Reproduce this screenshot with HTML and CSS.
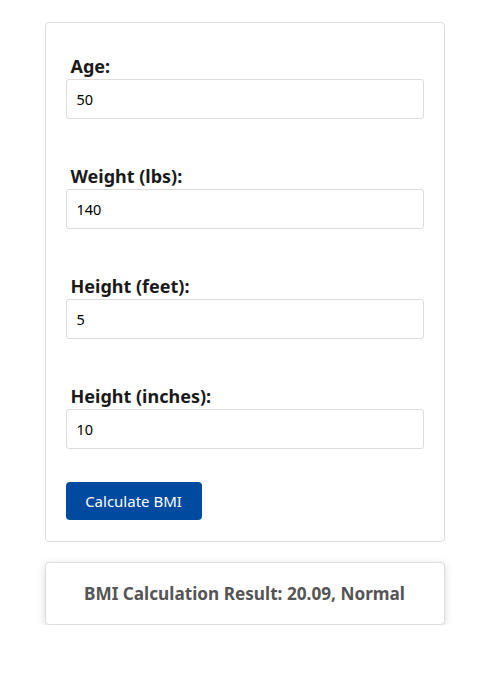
FILE: index.html
```html
<!DOCTYPE html>
<html>
<head>
<meta charset="utf-8">
<link rel="stylesheet" href="styles.css">
</head>
<body>
<div class="wrap">
  <form class="card form-card">
    <div class="group">
      <label class="label" for="age">Age:</label>
      <input class="input" id="age" type="text" value="50">
    </div>
    <div class="group">
      <label class="label" for="weight">Weight (lbs):</label>
      <input class="input" id="weight" type="text" value="140">
    </div>
    <div class="group">
      <label class="label" for="feet">Height (feet):</label>
      <input class="input" id="feet" type="text" value="5">
    </div>
    <div class="group">
      <label class="label" for="inches">Height (inches):</label>
      <input class="input" id="inches" type="text" value="10">
    </div>
    <button class="btn" type="button">Calculate BMI</button>
  </form>
  <div class="card result-card">
    <p class="result">BMI Calculation Result: 20.09, Normal</p>
  </div>
</div>
</body>
</html>
```
FILE: styles.css
```css
* { box-sizing: border-box; }
body {
  margin: 0;
  background: #fff;
  font-family: "Noto Sans", "Open Sans", sans-serif;
  color: #222;
}
.wrap {
  width: 402px;
  margin: 22px auto 0;
  padding-left: 2px;
}
.card {
  background: #fff;
  border: 1px solid #dcdcdc;
  border-radius: 4px;
}
.form-card {
  padding: 20px 20px 21px;
  display: flex;
  flex-direction: column;
  align-items: flex-start;
}
.group {
  width: 100%;
  padding-top: 12px;
  margin-bottom: 33px;
}
.group + .group { padding-top: 13px; }
.label {
  display: block;
  padding-left: 5px;
  padding-bottom: 1px;
  font-size: 18px;
  font-weight: 700;
  line-height: 23px;
  color: #1a1a1a;
}
.input {
  display: block;
  width: 100%;
  height: 40px;
  border: 1px solid #dcdcdc;
  border-radius: 3px;
  padding: 0 10px;
  font-family: inherit;
  font-size: 14.5px;
  color: #000;
  background: #fff;
  outline: none;
}
.btn {
  width: 136px;
  height: 38px;
  border: none;
  border-radius: 4px;
  background: #004a9f;
  color: #fff;
  font-family: inherit;
  font-size: 15px;
  cursor: pointer;
}
.result-card {
  margin-top: 20px;
  height: 63px;
  display: flex;
  align-items: center;
  justify-content: center;
  box-shadow: 0 2px 8px rgba(0,0,0,0.15);
}
.result {
  margin: 0;
  font-size: 17.2px;
  font-weight: 700;
  color: #555;
}
```
